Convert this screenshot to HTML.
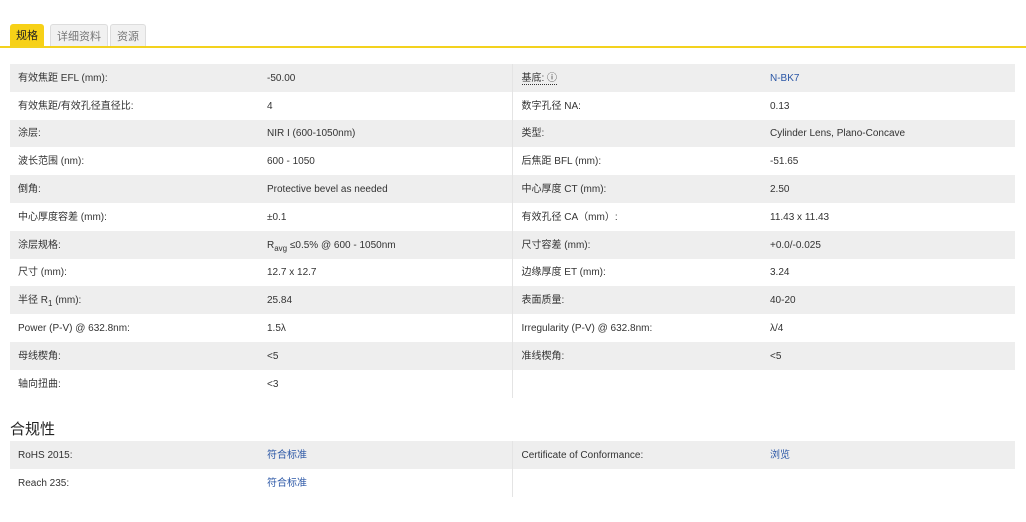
<!DOCTYPE html>
<html><head><meta charset="utf-8"><style>
body{margin:0;background:#fff;font-family:"Liberation Sans","Noto Sans CJK SC",sans-serif;font-size:10px;color:#333;width:1026px;height:522px;overflow:hidden;position:relative}
.tab{position:absolute;top:24px;height:23px;line-height:24px;font-size:11px;padding:0 6px;border-radius:3px 3px 0 0}
.line{position:absolute;left:0;top:46px;width:1026px;height:2px;background:#f3d21e}
table{position:absolute;left:10px;border-collapse:collapse;width:1005px;table-layout:fixed}
td{height:25.8px;padding:2px 0 0 0;vertical-align:middle;line-height:12px;white-space:nowrap}
tr:nth-child(odd) td{background:#eeeeee}
td.l{padding-left:8px}
td.v{border-right:1px solid #e4e4e4}
td.l2{padding-left:9px}
sub{line-height:0;font-size:8px}
a{color:#2a56a6;text-decoration:none}
h3{position:absolute;left:10px;top:418px;margin:0;font-size:15px;font-weight:normal;color:#222}
</style></head><body>
<div class="tab" style="left:10px;background:#f7d117;color:#222;">规格</div>
<div class="tab" style="left:50px;background:#f1f1f1;border:1px solid #ddd;border-bottom:none;color:#777;">详细资料</div>
<div class="tab" style="left:110px;background:#f1f1f1;border:1px solid #ddd;border-bottom:none;color:#777;">资源</div>
<div class="line"></div>
<table style="top:64px">
<colgroup><col style="width:257px"><col style="width:245px"><col style="width:258px"><col style="width:245px"></colgroup>
<tr><td class="l">有效焦距 EFL (mm):</td><td class="v">-50.00</td><td class="l2"><span style="border-bottom:1px dotted #333">基底: ⓘ</span></td><td><a>N-BK7</a></td></tr>
<tr><td class="l">有效焦距/有效孔径直径比:</td><td class="v">4</td><td class="l2">数字孔径 NA:</td><td>0.13</td></tr>
<tr><td class="l">涂层:</td><td class="v">NIR I (600-1050nm)</td><td class="l2">类型:</td><td>Cylinder Lens, Plano-Concave</td></tr>
<tr><td class="l">波长范围 (nm):</td><td class="v">600 - 1050</td><td class="l2">后焦距 BFL (mm):</td><td>-51.65</td></tr>
<tr><td class="l">倒角:</td><td class="v">Protective bevel as needed</td><td class="l2">中心厚度 CT (mm):</td><td>2.50</td></tr>
<tr><td class="l">中心厚度容差 (mm):</td><td class="v">±0.1</td><td class="l2">有效孔径 CA（mm）:</td><td>11.43 x 11.43</td></tr>
<tr><td class="l">涂层规格:</td><td class="v">R<sub>avg</sub> ≤0.5% @ 600 - 1050nm</td><td class="l2">尺寸容差 (mm):</td><td>+0.0/-0.025</td></tr>
<tr><td class="l">尺寸 (mm):</td><td class="v">12.7 x 12.7</td><td class="l2">边缘厚度 ET (mm):</td><td>3.24</td></tr>
<tr><td class="l">半径 R<sub>1</sub> (mm):</td><td class="v">25.84</td><td class="l2">表面质量:</td><td>40-20</td></tr>
<tr><td class="l">Power (P-V) @ 632.8nm:</td><td class="v">1.5λ</td><td class="l2">Irregularity (P-V) @ 632.8nm:</td><td>λ/4</td></tr>
<tr><td class="l">母线楔角:</td><td class="v">&lt;5</td><td class="l2">准线楔角:</td><td>&lt;5</td></tr>
<tr><td class="l" style="background:#fff">轴向扭曲:</td><td class="v" style="background:#fff">&lt;3</td><td class="l2" style="background:#fff"></td><td style="background:#fff"></td></tr>
</table>
<h3>合规性</h3>
<table style="top:441px">
<colgroup><col style="width:257px"><col style="width:245px"><col style="width:258px"><col style="width:245px"></colgroup>
<tr><td class="l">RoHS 2015:</td><td class="v"><a>符合标准</a></td><td class="l2">Certificate of Conformance:</td><td><a>浏览</a></td></tr>
<tr><td class="l">Reach 235:</td><td class="v"><a>符合标准</a></td><td class="l2"></td><td></td></tr>
</table>
</body></html>
